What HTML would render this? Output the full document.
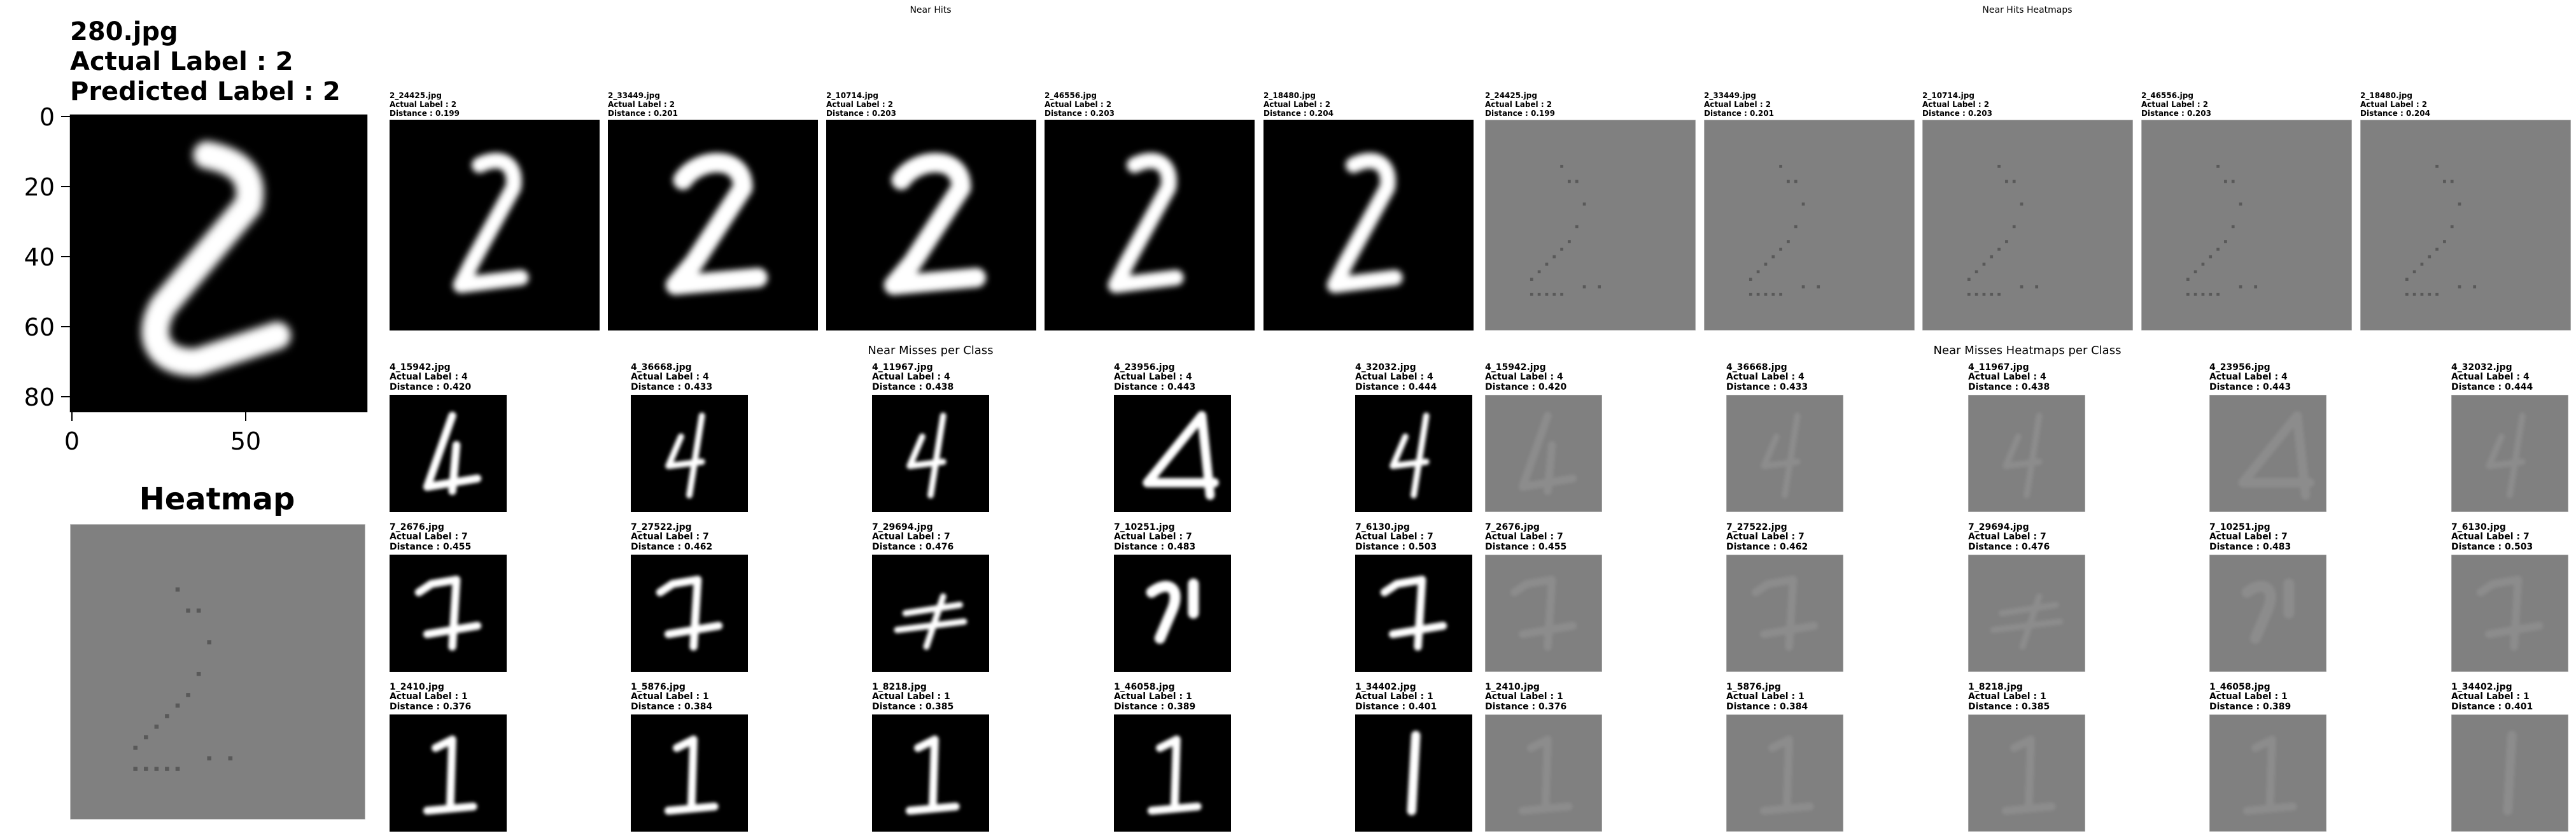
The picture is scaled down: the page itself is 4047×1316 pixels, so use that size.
<!DOCTYPE html>
<html><head><meta charset="utf-8"><style>
html,body{margin:0;padding:0;background:#fff;}
svg{display:block;}
text{font-family:"DejaVu Sans","Liberation Sans",sans-serif;fill:#000;}
.b{font-weight:bold;}
</style></head><body>
<svg width="4047" height="1316" viewBox="0 0 4047 1316" xmlns="http://www.w3.org/2000/svg">
<defs>
<filter id="bl" filterUnits="userSpaceOnUse" x="0" y="0" width="28" height="28"><feGaussianBlur stdDeviation="0.4"/></filter>
<symbol id="d2m" viewBox="0 0 28 28"><path d="M12.9,3.8 C15.5,4.3 17.5,5.5 16.8,8.5 L8.8,18 C7,21 8.5,23.5 12,23.3 L19.5,20.8" fill="none" stroke="#fff" stroke-width="2.6" stroke-linecap="round" stroke-linejoin="round" filter="url(#bl)"/></symbol>
<symbol id="d2" viewBox="0 0 28 28"><path d="M12,6 C15,4.5 17,6 16.5,9 L11,19 L9.5,22 L17.5,21" fill="none" stroke="#fff" stroke-width="2.1" stroke-linecap="round" stroke-linejoin="round" filter="url(#bl)"/></symbol>
<symbol id="d2b" viewBox="0 0 28 28"><path d="M10,8 C12,5 18,4.5 18,9 L11.5,19 L9,22 L20,21" fill="none" stroke="#fff" stroke-width="2.6" stroke-linecap="round" stroke-linejoin="round" filter="url(#bl)"/></symbol>
<symbol id="d4" viewBox="0 0 28 28"><path d="M15,5 L9,22 L21,20 M16,12 L15,23" fill="none" stroke="#fff" stroke-width="1.9" stroke-linecap="round" stroke-linejoin="round" filter="url(#bl)"/></symbol>
<symbol id="d4b" viewBox="0 0 28 28"><path d="M12,10 L9,17 L17,16 M17,5 L14,24" fill="none" stroke="#fff" stroke-width="1.5" stroke-linecap="round" stroke-linejoin="round" filter="url(#bl)"/></symbol>
<symbol id="d4c" viewBox="0 0 28 28"><path d="M21,5 L8,21 L24,21 M21,5 L23,24" fill="none" stroke="#fff" stroke-width="2.2" stroke-linecap="round" stroke-linejoin="round" filter="url(#bl)"/></symbol>
<symbol id="d7" viewBox="0 0 28 28"><path d="M7,9 L10,7 L16,6 L15,22 M9,19 L21,17" fill="none" stroke="#fff" stroke-width="1.9" stroke-linecap="round" stroke-linejoin="round" filter="url(#bl)"/></symbol>
<symbol id="d7b" viewBox="0 0 28 28"><path d="M8,14 L21,12 M17,10 L13,22 M6,18 L22,16" fill="none" stroke="#fff" stroke-width="1.5" stroke-linecap="round" stroke-linejoin="round" filter="url(#bl)"/></symbol>
<symbol id="d7c" viewBox="0 0 28 28"><path d="M9,9 C13,6 16,8 14,13 L11,20 M19,7 L19,14" fill="none" stroke="#fff" stroke-width="2.6" stroke-linecap="round" stroke-linejoin="round" filter="url(#bl)"/></symbol>
<symbol id="d1" viewBox="0 0 28 28"><path d="M11,8 L15,6 L14.5,22 M9,23 L20,22" fill="none" stroke="#fff" stroke-width="1.9" stroke-linecap="round" stroke-linejoin="round" filter="url(#bl)"/></symbol>
<symbol id="d1b" viewBox="0 0 28 28"><path d="M14.5,5 L13.5,23" fill="none" stroke="#fff" stroke-width="2.2" stroke-linecap="round" filter="url(#bl)"/></symbol>
<symbol id="hm" viewBox="0 0 28 28"><rect x="0" y="0" width="28" height="28" fill="#808080" stroke="#c8c8c8" stroke-width="0.1"/><g fill="#333" opacity="0.5"><rect x="10" y="6" width="0.4" height="0.4"/><rect x="11" y="8" width="0.4" height="0.4"/><rect x="12" y="8" width="0.4" height="0.4"/><rect x="13" y="11" width="0.4" height="0.4"/><rect x="12" y="14" width="0.4" height="0.4"/><rect x="11" y="16" width="0.4" height="0.4"/><rect x="10" y="17" width="0.4" height="0.4"/><rect x="9" y="18" width="0.4" height="0.4"/><rect x="8" y="19" width="0.4" height="0.4"/><rect x="7" y="20" width="0.4" height="0.4"/><rect x="6" y="21" width="0.4" height="0.4"/><rect x="6" y="23" width="0.4" height="0.4"/><rect x="7" y="23" width="0.4" height="0.4"/><rect x="8" y="23" width="0.4" height="0.4"/><rect x="9" y="23" width="0.4" height="0.4"/><rect x="10" y="23" width="0.4" height="0.4"/><rect x="13" y="22" width="0.4" height="0.4"/><rect x="15" y="22" width="0.4" height="0.4"/></g></symbol>
<symbol id="hw" viewBox="0 0 28 28"><rect x="0" y="0" width="28" height="28" fill="#808080" stroke="#c8c8c8" stroke-width="0.15"/></symbol>
</defs>

<text class="b" x="110" y="63" font-size="40">280.jpg</text>
<text class="b" x="110" y="110" font-size="40">Actual Label : 2</text>
<text class="b" x="110" y="157" font-size="40">Predicted Label : 2</text>

<rect x="110" y="180" width="467" height="467" fill="#000"/>
<use href="#d2m" x="110" y="180" width="467" height="467"/>
<rect x="110.5" y="180.5" width="466" height="466" fill="none" stroke="#000" stroke-width="1.5"/>
<g stroke="#000" stroke-width="2">
<line x1="96" y1="183" x2="110" y2="183"/><line x1="96" y1="293" x2="110" y2="293"/><line x1="96" y1="403" x2="110" y2="403"/><line x1="96" y1="513" x2="110" y2="513"/><line x1="96" y1="623" x2="110" y2="623"/>
<line x1="113" y1="647" x2="113" y2="661"/><line x1="386" y1="647" x2="386" y2="661"/>
</g>
<g font-size="38" text-anchor="end">
<text x="86" y="197">0</text><text x="86" y="307">20</text><text x="86" y="417">40</text><text x="86" y="527">60</text><text x="86" y="637">80</text>
</g>
<g font-size="38" text-anchor="middle">
<text x="113" y="706">0</text><text x="386" y="706">50</text>
</g>

<text class="b" x="341" y="800" font-size="48" text-anchor="middle">Heatmap</text>
<use href="#hm" x="110" y="823" width="464" height="464"/>

<g font-size="14" text-anchor="middle">
<text x="1462" y="20">Near Hits</text>
<text x="3185" y="20">Near Hits Heatmaps</text>
</g>
<g font-size="18" text-anchor="middle">
<text x="1462" y="556">Near Misses per Class</text>
<text x="3185" y="556">Near Misses Heatmaps per Class</text>
</g>

<g font-size="12">
<text class="b" x="612" y="154">2_24425.jpg</text><text class="b" x="612" y="168">Actual Label : 2</text><text class="b" x="612" y="182">Distance : 0.199</text>
<text class="b" x="955" y="154">2_33449.jpg</text><text class="b" x="955" y="168">Actual Label : 2</text><text class="b" x="955" y="182">Distance : 0.201</text>
<text class="b" x="1298" y="154">2_10714.jpg</text><text class="b" x="1298" y="168">Actual Label : 2</text><text class="b" x="1298" y="182">Distance : 0.203</text>
<text class="b" x="1641" y="154">2_46556.jpg</text><text class="b" x="1641" y="168">Actual Label : 2</text><text class="b" x="1641" y="182">Distance : 0.203</text>
<text class="b" x="1985" y="154">2_18480.jpg</text><text class="b" x="1985" y="168">Actual Label : 2</text><text class="b" x="1985" y="182">Distance : 0.204</text>
<text class="b" x="2333" y="154">2_24425.jpg</text><text class="b" x="2333" y="168">Actual Label : 2</text><text class="b" x="2333" y="182">Distance : 0.199</text>
<text class="b" x="2677" y="154">2_33449.jpg</text><text class="b" x="2677" y="168">Actual Label : 2</text><text class="b" x="2677" y="182">Distance : 0.201</text>
<text class="b" x="3020" y="154">2_10714.jpg</text><text class="b" x="3020" y="168">Actual Label : 2</text><text class="b" x="3020" y="182">Distance : 0.203</text>
<text class="b" x="3364" y="154">2_46556.jpg</text><text class="b" x="3364" y="168">Actual Label : 2</text><text class="b" x="3364" y="182">Distance : 0.203</text>
<text class="b" x="3708" y="154">2_18480.jpg</text><text class="b" x="3708" y="168">Actual Label : 2</text><text class="b" x="3708" y="182">Distance : 0.204</text>
</g>
<g>
<rect x="612" y="188" width="330" height="331" fill="#000"/><use href="#d2" x="612" y="188" width="330" height="331"/>
<rect x="955" y="188" width="330" height="331" fill="#000"/><use href="#d2b" x="955" y="188" width="330" height="331"/>
<rect x="1298" y="188" width="330" height="331" fill="#000"/><use href="#d2b" x="1298" y="188" width="330" height="331"/>
<rect x="1641" y="188" width="330" height="331" fill="#000"/><use href="#d2" x="1641" y="188" width="330" height="331"/>
<rect x="1985" y="188" width="330" height="331" fill="#000"/><use href="#d2" x="1985" y="188" width="330" height="331"/>
<use href="#hm" x="2333" y="188" width="331" height="331"/>
<use href="#hm" x="2677" y="188" width="331" height="331"/>
<use href="#hm" x="3020" y="188" width="331" height="331"/>
<use href="#hm" x="3364" y="188" width="331" height="331"/>
<use href="#hm" x="3708" y="188" width="331" height="331"/>
</g>

<g font-size="14">
<text class="b" x="612" y="581">4_15942.jpg</text><text class="b" x="612" y="596">Actual Label : 4</text><text class="b" x="612" y="612">Distance : 0.420</text>
<text class="b" x="991" y="581">4_36668.jpg</text><text class="b" x="991" y="596">Actual Label : 4</text><text class="b" x="991" y="612">Distance : 0.433</text>
<text class="b" x="1370" y="581">4_11967.jpg</text><text class="b" x="1370" y="596">Actual Label : 4</text><text class="b" x="1370" y="612">Distance : 0.438</text>
<text class="b" x="1750" y="581">4_23956.jpg</text><text class="b" x="1750" y="596">Actual Label : 4</text><text class="b" x="1750" y="612">Distance : 0.443</text>
<text class="b" x="2129" y="581">4_32032.jpg</text><text class="b" x="2129" y="596">Actual Label : 4</text><text class="b" x="2129" y="612">Distance : 0.444</text>
<text class="b" x="2333" y="581">4_15942.jpg</text><text class="b" x="2333" y="596">Actual Label : 4</text><text class="b" x="2333" y="612">Distance : 0.420</text>
<text class="b" x="2712" y="581">4_36668.jpg</text><text class="b" x="2712" y="596">Actual Label : 4</text><text class="b" x="2712" y="612">Distance : 0.433</text>
<text class="b" x="3092" y="581">4_11967.jpg</text><text class="b" x="3092" y="596">Actual Label : 4</text><text class="b" x="3092" y="612">Distance : 0.438</text>
<text class="b" x="3471" y="581">4_23956.jpg</text><text class="b" x="3471" y="596">Actual Label : 4</text><text class="b" x="3471" y="612">Distance : 0.443</text>
<text class="b" x="3851" y="581">4_32032.jpg</text><text class="b" x="3851" y="596">Actual Label : 4</text><text class="b" x="3851" y="612">Distance : 0.444</text>

<text class="b" x="612" y="832">7_2676.jpg</text><text class="b" x="612" y="847">Actual Label : 7</text><text class="b" x="612" y="863">Distance : 0.455</text>
<text class="b" x="991" y="832">7_27522.jpg</text><text class="b" x="991" y="847">Actual Label : 7</text><text class="b" x="991" y="863">Distance : 0.462</text>
<text class="b" x="1370" y="832">7_29694.jpg</text><text class="b" x="1370" y="847">Actual Label : 7</text><text class="b" x="1370" y="863">Distance : 0.476</text>
<text class="b" x="1750" y="832">7_10251.jpg</text><text class="b" x="1750" y="847">Actual Label : 7</text><text class="b" x="1750" y="863">Distance : 0.483</text>
<text class="b" x="2129" y="832">7_6130.jpg</text><text class="b" x="2129" y="847">Actual Label : 7</text><text class="b" x="2129" y="863">Distance : 0.503</text>
<text class="b" x="2333" y="832">7_2676.jpg</text><text class="b" x="2333" y="847">Actual Label : 7</text><text class="b" x="2333" y="863">Distance : 0.455</text>
<text class="b" x="2712" y="832">7_27522.jpg</text><text class="b" x="2712" y="847">Actual Label : 7</text><text class="b" x="2712" y="863">Distance : 0.462</text>
<text class="b" x="3092" y="832">7_29694.jpg</text><text class="b" x="3092" y="847">Actual Label : 7</text><text class="b" x="3092" y="863">Distance : 0.476</text>
<text class="b" x="3471" y="832">7_10251.jpg</text><text class="b" x="3471" y="847">Actual Label : 7</text><text class="b" x="3471" y="863">Distance : 0.483</text>
<text class="b" x="3851" y="832">7_6130.jpg</text><text class="b" x="3851" y="847">Actual Label : 7</text><text class="b" x="3851" y="863">Distance : 0.503</text>

<text class="b" x="612" y="1083">1_2410.jpg</text><text class="b" x="612" y="1098">Actual Label : 1</text><text class="b" x="612" y="1114">Distance : 0.376</text>
<text class="b" x="991" y="1083">1_5876.jpg</text><text class="b" x="991" y="1098">Actual Label : 1</text><text class="b" x="991" y="1114">Distance : 0.384</text>
<text class="b" x="1370" y="1083">1_8218.jpg</text><text class="b" x="1370" y="1098">Actual Label : 1</text><text class="b" x="1370" y="1114">Distance : 0.385</text>
<text class="b" x="1750" y="1083">1_46058.jpg</text><text class="b" x="1750" y="1098">Actual Label : 1</text><text class="b" x="1750" y="1114">Distance : 0.389</text>
<text class="b" x="2129" y="1083">1_34402.jpg</text><text class="b" x="2129" y="1098">Actual Label : 1</text><text class="b" x="2129" y="1114">Distance : 0.401</text>
<text class="b" x="2333" y="1083">1_2410.jpg</text><text class="b" x="2333" y="1098">Actual Label : 1</text><text class="b" x="2333" y="1114">Distance : 0.376</text>
<text class="b" x="2712" y="1083">1_5876.jpg</text><text class="b" x="2712" y="1098">Actual Label : 1</text><text class="b" x="2712" y="1114">Distance : 0.384</text>
<text class="b" x="3092" y="1083">1_8218.jpg</text><text class="b" x="3092" y="1098">Actual Label : 1</text><text class="b" x="3092" y="1114">Distance : 0.385</text>
<text class="b" x="3471" y="1083">1_46058.jpg</text><text class="b" x="3471" y="1098">Actual Label : 1</text><text class="b" x="3471" y="1114">Distance : 0.389</text>
<text class="b" x="3851" y="1083">1_34402.jpg</text><text class="b" x="3851" y="1098">Actual Label : 1</text><text class="b" x="3851" y="1114">Distance : 0.401</text>
</g>

<rect x="612" y="620" width="184" height="184" fill="#000"/><use href="#d4" x="612" y="620" width="184" height="184"/>
<rect x="991" y="620" width="184" height="184" fill="#000"/><use href="#d4b" x="991" y="620" width="184" height="184"/>
<rect x="1370" y="620" width="184" height="184" fill="#000"/><use href="#d4b" x="1370" y="620" width="184" height="184"/>
<rect x="1750" y="620" width="184" height="184" fill="#000"/><use href="#d4c" x="1750" y="620" width="184" height="184"/>
<rect x="2129" y="620" width="184" height="184" fill="#000"/><use href="#d4b" x="2129" y="620" width="184" height="184"/>
<rect x="612" y="871" width="184" height="184" fill="#000"/><use href="#d7" x="612" y="871" width="184" height="184"/>
<rect x="991" y="871" width="184" height="184" fill="#000"/><use href="#d7" x="991" y="871" width="184" height="184"/>
<rect x="1370" y="871" width="184" height="184" fill="#000"/><use href="#d7b" x="1370" y="871" width="184" height="184"/>
<rect x="1750" y="871" width="184" height="184" fill="#000"/><use href="#d7c" x="1750" y="871" width="184" height="184"/>
<rect x="2129" y="871" width="184" height="184" fill="#000"/><use href="#d7" x="2129" y="871" width="184" height="184"/>
<rect x="612" y="1122" width="184" height="184" fill="#000"/><use href="#d1" x="612" y="1122" width="184" height="184"/>
<rect x="991" y="1122" width="184" height="184" fill="#000"/><use href="#d1" x="991" y="1122" width="184" height="184"/>
<rect x="1370" y="1122" width="184" height="184" fill="#000"/><use href="#d1" x="1370" y="1122" width="184" height="184"/>
<rect x="1750" y="1122" width="184" height="184" fill="#000"/><use href="#d1" x="1750" y="1122" width="184" height="184"/>
<rect x="2129" y="1122" width="184" height="184" fill="#000"/><use href="#d1b" x="2129" y="1122" width="184" height="184"/>

<g>
<use href="#hw" x="2333" y="620" width="184" height="184"/><use href="#hw" x="2712" y="620" width="184" height="184"/><use href="#hw" x="3092" y="620" width="184" height="184"/><use href="#hw" x="3471" y="620" width="184" height="184"/><use href="#hw" x="3851" y="620" width="184" height="184"/>
<use href="#hw" x="2333" y="871" width="184" height="184"/><use href="#hw" x="2712" y="871" width="184" height="184"/><use href="#hw" x="3092" y="871" width="184" height="184"/><use href="#hw" x="3471" y="871" width="184" height="184"/><use href="#hw" x="3851" y="871" width="184" height="184"/>
<use href="#hw" x="2333" y="1122" width="184" height="184"/><use href="#hw" x="2712" y="1122" width="184" height="184"/><use href="#hw" x="3092" y="1122" width="184" height="184"/><use href="#hw" x="3471" y="1122" width="184" height="184"/><use href="#hw" x="3851" y="1122" width="184" height="184"/>
</g>
<g opacity="0.1">
<use href="#d4" x="2333" y="620" width="184" height="184"/><use href="#d4b" x="2712" y="620" width="184" height="184"/><use href="#d4b" x="3092" y="620" width="184" height="184"/><use href="#d4c" x="3471" y="620" width="184" height="184"/><use href="#d4b" x="3851" y="620" width="184" height="184"/>
<use href="#d7" x="2333" y="871" width="184" height="184"/><use href="#d7" x="2712" y="871" width="184" height="184"/><use href="#d7b" x="3092" y="871" width="184" height="184"/><use href="#d7c" x="3471" y="871" width="184" height="184"/><use href="#d7" x="3851" y="871" width="184" height="184"/>
<use href="#d1" x="2333" y="1122" width="184" height="184"/><use href="#d1" x="2712" y="1122" width="184" height="184"/><use href="#d1" x="3092" y="1122" width="184" height="184"/><use href="#d1" x="3471" y="1122" width="184" height="184"/><use href="#d1b" x="3851" y="1122" width="184" height="184"/>
</g>
</svg>
</body></html>
